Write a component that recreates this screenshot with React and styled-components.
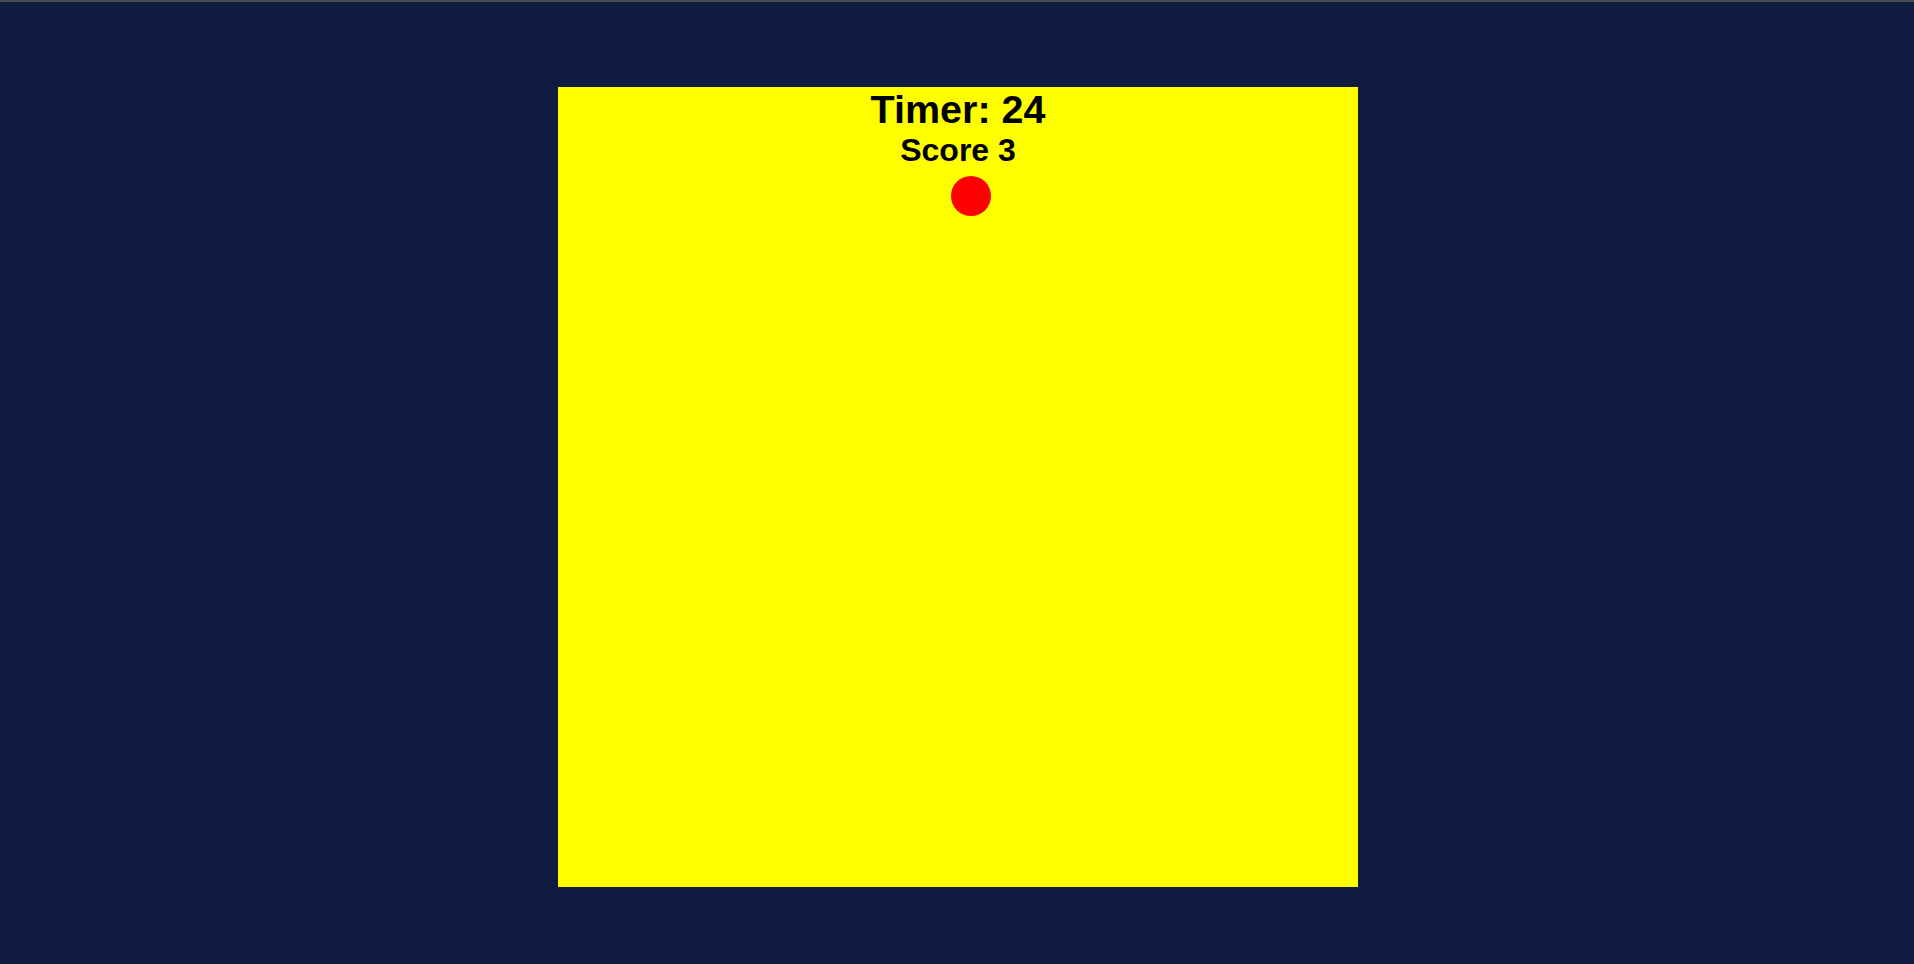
import React from "react";
import styled, { createGlobalStyle } from "styled-components";

const Global = createGlobalStyle`
  html, body {
    margin: 0;
    padding: 0;
    background: #0f1c3f;
    font-family: "Liberation Sans", Arial, sans-serif;
  }
`;

const Page = styled.div`
  box-sizing: border-box;
  min-height: 100vh;
  border-top: 2px solid #4d4d4f;
  padding: 85px 0 0 2px;
  display: flex;
  justify-content: center;
  align-items: flex-start;
`;

const Board = styled.div`
  position: relative;
  width: 800px;
  height: 800px;
  background: #ffff00;
  text-align: center;
  color: #000;
`;

const Title = styled.h1`
  margin: 0;
  font-size: ${(p) => p.$size}px;
  font-weight: 700;
  line-height: ${(p) => p.$lh}px;
`;

const Target = styled.div`
  position: absolute;
  width: 40px;
  height: 40px;
  border-radius: 50%;
  background: #ff0000;
`;

export default function App() {
  const target = { x: 393, y: 89 };
  return (
    <>
      <Global />
      <Page>
        <Board>
          <Title $size={39.5} $lh={45}>Timer: 24</Title>
          <Title $size={32} $lh={37}>Score 3</Title>
          <Target style={{ left: target.x, top: target.y }} />
        </Board>
      </Page>
    </>
  );
}
